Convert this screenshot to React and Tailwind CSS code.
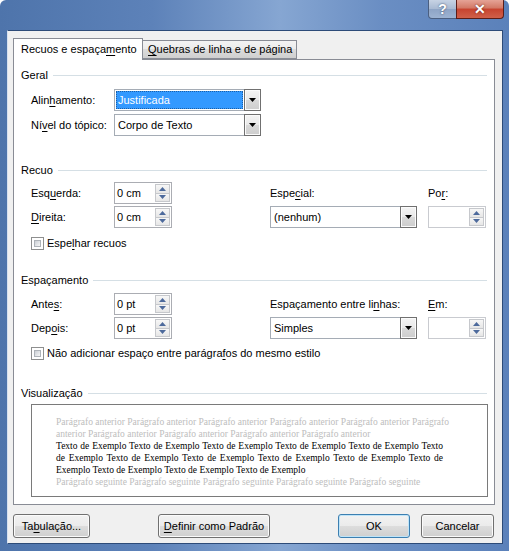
import React from 'react';

function U({ children }) {
  return <span className="underline underline-offset-[2px]">{children}</span>;
}

function ArrowDown({ className = 'fill-black' }) {
  return (
    <svg width="7" height="4" viewBox="0 0 7 4" className={className}>
      <path d="M0 0h7L3.5 4z" />
    </svg>
  );
}

function ArrowUp({ className }) {
  return (
    <svg width="7" height="4" viewBox="0 0 7 4" className={className}>
      <path d="M3.5 0L7 4H0z" />
    </svg>
  );
}

function Select({ value, selected }) {
  return (
    <div className="flex h-[22px] w-[147px] border border-[#a5acb5] bg-white">
      <div className="flex flex-1 items-center p-[1px]">
        {selected ? (
          <div className="flex h-full w-full items-center border border-dotted border-[#1b5fa8] bg-[#3399ff] pl-[1px] text-white">
            {value}
          </div>
        ) : (
          <span className="pl-[2px]">{value}</span>
        )}
      </div>
      <div className="-my-px -mr-px flex h-[22px] w-[17px] items-center justify-center border border-[#707070] bg-[linear-gradient(#f4f4f4,#e9e9e9_50%,#d9d9d9_50%,#cdcdcd)] shadow-[inset_0_0_0_1px_#fbfbfb]">
        <ArrowDown />
      </div>
    </div>
  );
}

function Spinner({ value, disabled }) {
  return (
    <div
      className={`flex h-[22px] w-[58px] border bg-white ${
        disabled ? 'border-[#c9cbd0]' : 'border-[#abadb3]'
      }`}
    >
      <div className="flex flex-1 items-center pl-[2px]">{value}</div>
      <div className="my-px mr-px flex w-[15px] flex-col">
        <div className="flex flex-1 items-center justify-center border border-[#c6c8cc] bg-[linear-gradient(#f7f7f7,#e6e6e6)]">
          <ArrowUp className="fill-[#4d6a9c]" />
        </div>
        <div className="flex flex-1 items-center justify-center border border-t-0 border-[#c6c8cc] bg-[linear-gradient(#f7f7f7,#e6e6e6)]">
          <ArrowDown className="fill-[#4d6a9c]" />
        </div>
      </div>
    </div>
  );
}

function Checkbox({ children }) {
  return (
    <div className="flex h-[16px] items-center pl-[10px]">
      <div className="h-[13px] w-[13px] border border-[#8e8f8f] bg-white p-[2px]">
        <div className="h-full w-full border border-[#aeb3b9] bg-[linear-gradient(135deg,#cbcfd5,#f6f6f6)]" />
      </div>
      <span className="ml-[3px]">{children}</span>
    </div>
  );
}

function Group({ label }) {
  return (
    <div className="flex h-[16px] items-center">
      <span>{label}</span>
      <div className="ml-[5px] h-px flex-1 bg-[#d5dfe5]" />
    </div>
  );
}

function Button({ children, w, primary }) {
  return (
    <div
      className={`flex h-[24px] items-center justify-center rounded-[3px] border bg-[linear-gradient(#f2f2f2,#ebebeb_50%,#dddddd_50%,#cfcfcf)] ${w} ${
        primary
          ? 'border-[#3c7fb1] shadow-[inset_0_0_0_1px_#bfe4f8]'
          : 'border-[#707070] shadow-[inset_0_0_0_1px_#fbfbfb]'
      }`}
    >
      {children}
    </div>
  );
}

const gray = 'text-[#bdbdbd]';

export default function App() {
  return (
    <div className="relative h-[551px] w-[509px] overflow-hidden rounded-t-[6px] bg-[linear-gradient(90deg,#4e74ab_0%,#5d82b9_30%,#86a6d2_55%,#6a8ec3_75%,#5b81ba_100%)] font-['Liberation_Sans',Arial,sans-serif] text-[11px] text-black">
      {/* title bar */}
      <div className="flex h-[30px] items-start justify-end pr-[5px]">
        <div className="flex h-[19px] w-[29px] items-center justify-center rounded-bl-[4px] border border-t-0 border-[#4b5f80] bg-[linear-gradient(#c7d3e4,#a8b9d2_50%,#8ea4c5_50%,#9db3d2)] text-[14px] font-bold text-white [text-shadow:0_0_2px_#2d3f5c]">
          ?
        </div>
        <div className="-ml-px flex h-[19px] w-[48px] items-center justify-center rounded-br-[4px] border border-t-0 border-[#5b1d18] bg-[linear-gradient(#e5a396,#d27865_45%,#c7432f_50%,#d0604a)] text-[14px] font-bold text-white [text-shadow:0_0_2px_#5a1810]">
          ✕
        </div>
      </div>

      {/* client area */}
      <div className="ml-[7px] h-[514px] w-[496px] border border-[#2d4b78] border-l-[#d6e1f0] bg-[#f0f0f0] pl-[5px]">
        {/* tabs */}
        <div className="mt-[7px] flex items-end">
          <div className="relative z-10 -mb-px flex h-[22px] w-[130px] items-center border border-b-0 border-[#898c95] bg-white pl-[7px]">
            Recuos e espaça<U>m</U>ento
          </div>
          <div className="flex h-[19px] w-[154px] items-center border border-l-0 border-[#898c95] bg-[linear-gradient(#f3f3f3,#ebebeb_50%,#dcdcdc_50%,#cfcfcf)] pl-[5px]">
            <U>Q</U>uebras de linha e de página
          </div>
        </div>

        {/* panel */}
        <div className="flex h-[446px] w-[482px] flex-col border border-[#898c95] bg-white pl-[7px] pr-[7px] pt-[7px]">
          <Group label="Geral" />
          <div className="mt-[6px] flex items-center pl-[10px]">
            <div className="w-[83px]">
              Alin<U>h</U>amento:
            </div>
            <Select value="Justificada" selected />
          </div>
          <div className="mt-[3px] flex items-center pl-[10px]">
            <div className="w-[83px]">
              Ní<U>v</U>el do tópico:
            </div>
            <Select value="Corpo de Texto" />
          </div>

          <div className="mt-[26px]">
            <Group label="Recuo" />
          </div>
          <div className="mt-[4px] flex items-center pl-[10px]">
            <div className="w-[83px]">
              Esq<U>u</U>erda:
            </div>
            <Spinner value="0 cm" />
            <div className="ml-[98px] w-[158px]">
              Espe<U>c</U>ial:
            </div>
            <div>
              Po<U>r</U>:
            </div>
          </div>
          <div className="mt-[2px] flex items-center pl-[10px]">
            <div className="w-[83px]">
              <U>D</U>ireita:
            </div>
            <Spinner value="0 cm" />
            <div className="ml-[98px] flex">
              <Select value="(nenhum)" />
              <div className="ml-[11px]">
                <Spinner disabled />
              </div>
            </div>
          </div>
          <div className="mt-[7px]">
            <Checkbox>
              Espe<U>l</U>har recuos
            </Checkbox>
          </div>

          <div className="mt-[21px]">
            <Group label="Espaçamento" />
          </div>
          <div className="mt-[5px] flex items-center pl-[10px]">
            <div className="w-[83px]">
              Ante<U>s</U>:
            </div>
            <Spinner value="0 pt" />
            <div className="ml-[98px] w-[158px]">
              Espaçamento entre li<U>n</U>has:
            </div>
            <div>
              <U>E</U>m:
            </div>
          </div>
          <div className="mt-[2px] flex items-center pl-[10px]">
            <div className="w-[83px]">
              Dep<U>o</U>is:
            </div>
            <Spinner value="0 pt" />
            <div className="ml-[98px] flex">
              <Select value="Simples" />
              <div className="ml-[11px]">
                <Spinner disabled />
              </div>
            </div>
          </div>
          <div className="mt-[6px]">
            <Checkbox>
              Não adicionar espaço entre parágra<U>f</U>os do mesmo estilo
            </Checkbox>
          </div>

          <div className="mt-[24px]">
            <Group label="Visualização" />
          </div>
          <div className="ml-[10px] mt-[3px] h-[93px] w-[457px] overflow-hidden border border-[#7a7a7a] bg-white pl-[24px] pt-[11px] font-['Liberation_Serif','Times_New_Roman',serif] text-[9.5px] leading-[12px]">
            <div className="w-[387px]">
              <div className={`whitespace-nowrap ${gray}`}>
                Parágrafo anterior Parágrafo anterior Parágrafo anterior Parágrafo anterior Parágrafo anterior Parágrafo
              </div>
              <div className={`whitespace-nowrap ${gray}`}>
                anterior Parágrafo anterior Parágrafo anterior Parágrafo anterior Parágrafo anterior
              </div>
              <div className="text-justify [text-align-last:justify]">
                Texto de Exemplo Texto de Exemplo Texto de Exemplo Texto de Exemplo Texto de Exemplo Texto
              </div>
              <div className="text-justify [text-align-last:justify]">
                de Exemplo Texto de Exemplo Texto de Exemplo Texto de Exemplo Texto de Exemplo Texto de
              </div>
              <div className="whitespace-nowrap">
                Exemplo Texto de Exemplo Texto de Exemplo Texto de Exemplo
              </div>
              <div className={`whitespace-nowrap ${gray}`}>
                Parágrafo seguinte Parágrafo seguinte Parágrafo seguinte Parágrafo seguinte Parágrafo seguinte
              </div>
            </div>
          </div>
        </div>

        {/* buttons */}
        <div className="mt-[9px] flex">
          <Button w="w-[77px]">
            Ta<U>b</U>ulação...
          </Button>
          <div className="ml-[68px]">
            <Button w="w-[112px]">
              <U>D</U>efinir como Padrão
            </Button>
          </div>
          <div className="ml-[68px]">
            <Button w="w-[72px]" primary>
              OK
            </Button>
          </div>
          <div className="ml-[11px]">
            <Button w="w-[73px]">Cancelar</Button>
          </div>
        </div>
      </div>
    </div>
  );
}
